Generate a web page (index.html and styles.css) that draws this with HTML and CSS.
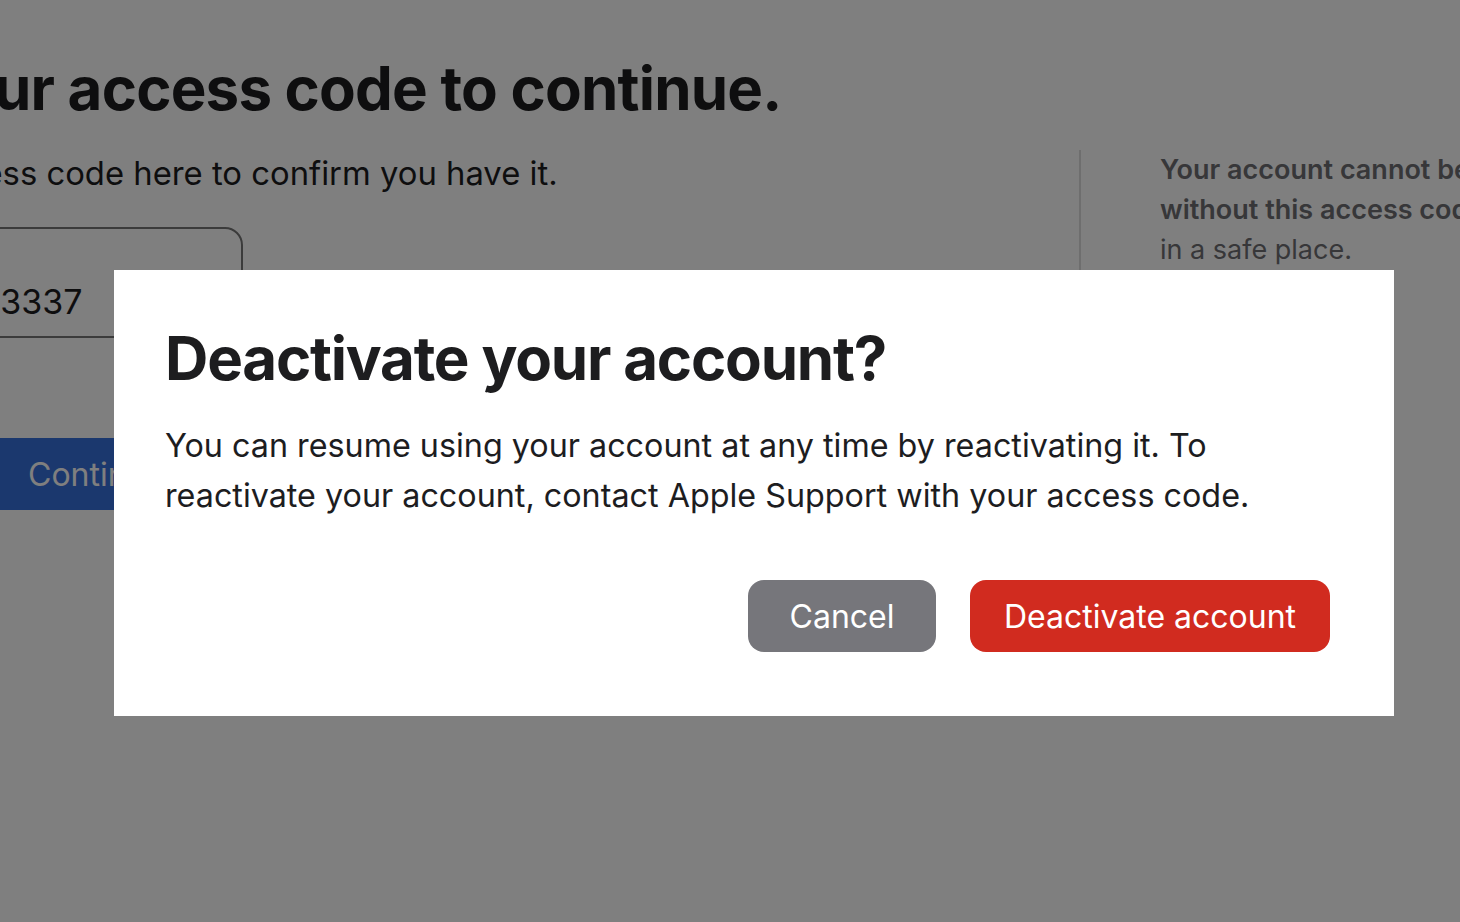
FILE: index.html
```html
<!DOCTYPE html>
<html lang="en">
<head>
<meta charset="utf-8">
<title>Deactivate your account</title>
<link rel="stylesheet" href="styles.css">
</head>
<body>
<div class="page">
  <div class="main">
    <h1 class="page-title">Enter your access code to continue.</h1>
    <div class="columns">
      <div class="left">
        <p class="lead">Enter your access code here to confirm you have it.</p>
        <div class="field"><span class="field-value">1234 5678 3337</span></div>
        <button class="btn-continue">Continue</button>
      </div>
      <div class="divider"></div>
      <div class="right">
        <p class="note"><strong>Your account cannot be recovered<br>without this access code.</strong> Keep it<br>in a safe place.</p>
      </div>
    </div>
  </div>
</div>
<div class="overlay"></div>
<div class="modal" role="dialog">
  <h2 class="modal-title">Deactivate your account?</h2>
  <p class="modal-text">You can resume using your account at any time by reactivating it. To reactivate your account, contact Apple Support with your access code.</p>
  <div class="modal-actions">
    <button class="btn btn-cancel">Cancel</button>
    <button class="btn btn-danger">Deactivate account</button>
  </div>
</div>
</body>
</html>
```
FILE: styles.css
```css
* { box-sizing: border-box; }
html, body {
  margin: 0;
  padding: 0;
  width: 1460px;
  height: 922px;
  overflow: hidden;
  background: #ffffff;
  font-family: Inter, "Noto Sans", sans-serif;
  color: #1d1d1f;
}
.page {
  width: 1460px;
  height: 922px;
  overflow: hidden;
}
.main {
  margin-left: -241px;
  padding-top: 52px;
}
.page-title {
  margin: 0;
  font-size: 60px;
  font-weight: 700;
  letter-spacing: -0.8px;
  line-height: 72px;
  color: #1d1d1f;
  white-space: nowrap;
}
.columns {
  display: flex;
  margin-top: 26px;
}
.left {
  width: 1320px;
  flex: none;
}
.lead {
  margin: 0;
  font-size: 32.8px;
  line-height: 46px;
  color: #1d1d1f;
  white-space: nowrap;
}
.field {
  margin-top: 31px;
  width: 484px;
  height: 111px;
  border: 2px solid #767676;
  border-radius: 18px;
  display: flex;
  align-items: flex-end;
  padding: 0 0 14px 61px;
}
.field-value {
  font-size: 34px;
  line-height: 40px;
  color: #1d1d1f;
  white-space: nowrap;
}
.btn-continue {
  margin-top: 100px;
  width: 461px;
  height: 72px;
  border: none;
  border-radius: 16px;
  background: #3670dc;
  color: #ffffff;
  font-family: inherit;
  font-size: 32px;
  text-align: left;
  padding-left: 269px;
}
.divider {
  width: 2px;
  background: #dcdcdc;
  height: 200px;
  flex: none;
}
.right {
  padding-left: 79px;
  padding-top: 0;
}
.note {
  margin: 0;
  width: 600px;
  font-size: 27px;
  line-height: 40px;
  color: #6e6e73;
  white-space: nowrap;
}
.note strong { font-weight: 600; }
.overlay {
  position: fixed;
  inset: 0;
  background: rgba(0, 0, 0, 0.5);
}
.modal {
  position: absolute;
  left: 114px;
  top: 270px;
  width: 1280px;
  height: 446px;
  background: #ffffff;
  padding: 52px 64px 64px 51px;
  display: flex;
  flex-direction: column;
}
.modal-title {
  margin: 0;
  font-size: 60px;
  font-weight: 700;
  letter-spacing: -1.2px;
  line-height: 72px;
  color: #1d1d1f;
}
.modal-text {
  margin: 27px 0 0 0;
  font-size: 32.3px;
  line-height: 50px;
  color: #1d1d1f;
}
.modal-actions {
  margin-top: auto;
  display: flex;
  justify-content: flex-end;
  gap: 34px;
}
.btn {
  height: 72px;
  border: none;
  border-radius: 16px;
  color: #ffffff;
  font-family: inherit;
  font-size: 32px;
  padding: 0;
}
.btn-cancel {
  width: 188px;
  background: #76767b;
}
.btn-danger {
  width: 360px;
  background: #d12b1f;
}
```
